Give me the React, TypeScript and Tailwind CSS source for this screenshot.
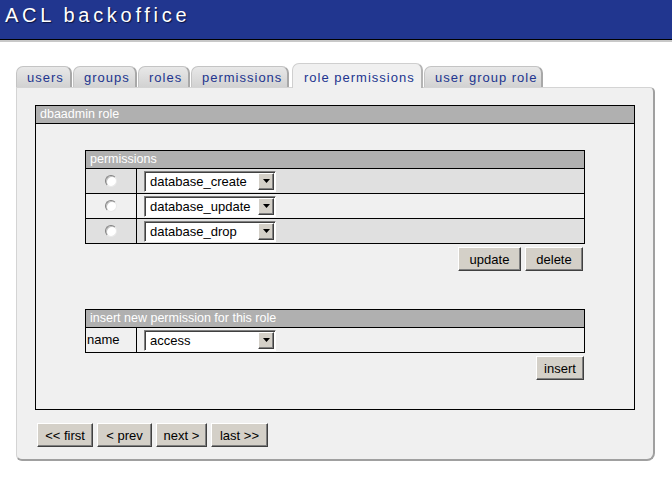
import React from "react";

const F = { fontFamily: '"Liberation Sans", Arial, sans-serif' };

function Tab({ label, w, active, extra }: { label: string; w: string; active?: boolean; extra?: string }) {
  if (active) {
    return (
      <div
        className={`${w} ${extra ?? ""} relative z-10 -mb-px h-[25px] flex items-end pl-[11px] pb-[3px] rounded-t-[7px] bg-[#f0f0f0] border-t border-l border-[#cfcfcf] border-r-2 border-r-[#b4b4b4] text-[13px] leading-[15px] tracking-[1px] text-[#22358f]`}
      >
        {label}
      </div>
    );
  }
  return (
    <div
      className={`${w} ${extra ?? ""} h-[21px] flex items-end pl-[10px] pb-[2px] rounded-t-[7px] bg-gradient-to-b from-[#e8e8e8] to-[#d2d2d2] border-t border-l border-[#c4c4c4] border-r-2 border-r-[#a8a8a8] text-[13px] leading-[15px] tracking-[1px] text-[#22358f]`}
    >
      {label}
    </div>
  );
}

function Select({ value }: { value: string }) {
  return (
    <div className="w-[132px] h-[21px] flex border border-t-[#808080] border-l-[#808080] border-b-white border-r-white bg-white shadow-[inset_1px_1px_0_#404040]">
      <div className="flex-1 pl-[5px] pt-[2px] text-[13px] leading-[16px] text-black whitespace-nowrap overflow-hidden">{value}</div>
      <div className="w-[16px] h-[17px] mt-[1px] mr-[1px] bg-[#d4d0c8] border border-t-white border-l-white border-b-[#404040] border-r-[#404040] shadow-[inset_-1px_-1px_0_#808080] flex items-center justify-center">
        <svg width="7" height="4" viewBox="0 0 7 4">
          <path d="M0 0h7L3.5 4z" fill="#000" />
        </svg>
      </div>
    </div>
  );
}

function Btn({ label, w }: { label: string; w: string }) {
  return (
    <div
      className={`${w} h-[24px] flex items-center justify-center bg-[#d4d0c8] border border-t-white border-l-white border-b-[#404040] border-r-[#404040] shadow-[inset_-1px_-1px_0_#808080] text-[13px] leading-[15px] text-black`}
    >
      {label}
    </div>
  );
}

function Radio() {
  return (
    <div className="w-[12px] h-[12px] rounded-full bg-white border border-t-[#808080] border-l-[#808080] border-b-[#e8e8e8] border-r-[#e8e8e8] shadow-[inset_1px_1px_0_#c0c0c0]" />
  );
}

export default function App() {
  const rows = [
    { v: "database_create", cls: "h-[25px] bg-[#e0e0e0] border-b border-black" },
    { v: "database_update", cls: "h-[25px] bg-[#f0f0f0] border-b border-black" },
    { v: "database_drop", cls: "h-[24px] bg-[#e0e0e0]" },
  ];
  return (
    <div className="w-[672px] h-[478px] bg-white overflow-hidden" style={F}>
      {/* header */}
      <div className="h-[40px] bg-[#21368f] border-b border-black shadow-[0_2px_0_#c8c8c8] pl-[5px] pt-[4px]">
        <div className="text-[20px] leading-[23px] tracking-[3.7px] text-white [text-shadow:1px_1px_1px_#0a1440]">
          ACL backoffice
        </div>
      </div>

      {/* tabs */}
      <div className="mt-[23px] ml-[16px] h-[24px] flex items-end gap-[1px]">
        <Tab label="users" w="w-[56px]" />
        <Tab label="groups" w="w-[64px]" />
        <Tab label="roles" w="w-[52px]" />
        <Tab label="permissions" w="w-[98px]" />
        <Tab label="role permissions" w="w-[131px]" active extra="ml-[2px]" />
        <Tab label="user group role" w="w-[119px]" />
      </div>

      {/* panel */}
      <div className="ml-[16px] w-[639px] h-[374px] bg-[#f0f0f0] border-t border-l border-[#d4d4d4] border-r-2 border-b-2 border-r-[#a0a0a0] border-b-[#a0a0a0] rounded-tr-[5px] rounded-br-[8px] rounded-bl-[6px]">
        <div className="ml-[18px] mt-[17px] w-[600px] h-[305px] border border-black">
          <div className="h-[18px] bg-[#b0b0b0] border-b border-black pl-[4px] text-[12.5px] leading-[17px] text-white">
            dbaadmin role
          </div>

          {/* permissions table */}
          <div className="ml-[49px] mt-[26px] w-[500px]">
            <div className="border border-black">
              <div className="h-[18px] bg-[#b0b0b0] border-b border-black pl-[4px] text-[12.5px] leading-[17px] text-white">
                permissions
              </div>
              {rows.map((r) => (
                <div key={r.v} className={`flex ${r.cls}`}>
                  <div className="w-[51px] border-r border-black flex items-center justify-center">
                    <Radio />
                  </div>
                  <div className="flex items-center pl-[7px]">
                    <Select value={r.v} />
                  </div>
                </div>
              ))}
            </div>
            <div className="mt-[3px] flex justify-end gap-[4px] pr-[2px]">
              <Btn label="update" w="w-[63px]" />
              <Btn label="delete" w="w-[58px]" />
            </div>
          </div>

          {/* insert table */}
          <div className="ml-[49px] mt-[38px] w-[500px]">
            <div className="border border-black">
              <div className="h-[18px] bg-[#b0b0b0] border-b border-black pl-[4px] text-[12.5px] leading-[17px] text-white">
                insert new permission for this role
              </div>
              <div className="h-[24px] flex bg-[#f0f0f0]">
                <div className="w-[51px] border-r border-black flex items-center pl-[1px] text-[13px] text-black">name</div>
                <div className="flex items-center pl-[7px]">
                  <Select value="access" />
                </div>
              </div>
            </div>
            <div className="mt-[3px] flex justify-end pr-[1px]">
              <Btn label="insert" w="w-[48px]" />
            </div>
          </div>
        </div>

        {/* nav */}
        <div className="ml-[20px] mt-[13px] flex gap-[4px]">
          <Btn label="<< first" w="w-[56px]" />
          <Btn label="< prev" w="w-[55px]" />
          <Btn label="next >" w="w-[51px]" />
          <Btn label="last >>" w="w-[57px]" />
        </div>
      </div>
    </div>
  );
}
